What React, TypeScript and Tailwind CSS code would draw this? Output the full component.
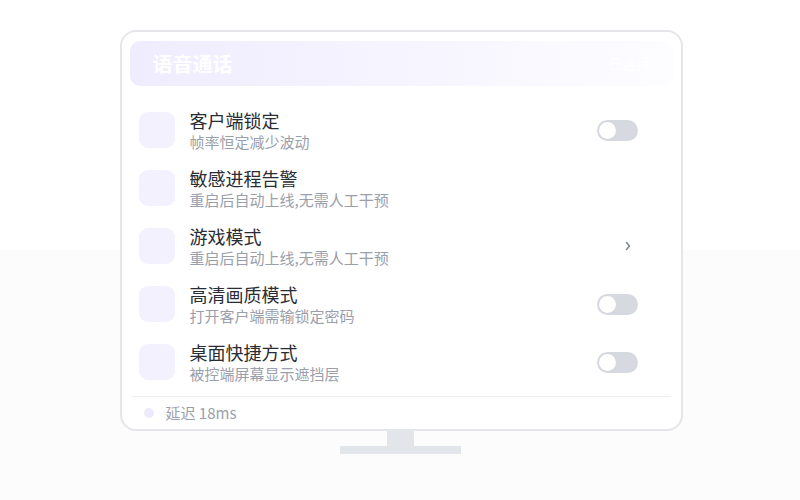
import type { ReactNode } from "react";

interface SettingRow {
  title: string;
  desc: string;
  action: "toggle" | "arrow" | "none";
}

const rows: SettingRow[] = [
  { title: "客户端锁定", desc: "帧率恒定减少波动", action: "toggle" },
  { title: "敏感进程告警", desc: "重启后自动上线,无需人工干预", action: "none" },
  { title: "游戏模式", desc: "重启后自动上线,无需人工干预", action: "arrow" },
  { title: "高清画质模式", desc: "打开客户端需输锁定密码", action: "toggle" },
  { title: "桌面快捷方式", desc: "被控端屏幕显示遮挡层", action: "toggle" },
];

function Toggle() {
  return (
    <div className="flex h-[21px] w-[41px] items-center rounded-full bg-[#d6d9df] p-[2px]">
      <div className="h-[17px] w-[17px] rounded-full bg-white shadow-[0_0_0_0.5px_#cfd3da]" />
    </div>
  );
}

function Chevron() {
  return (
    <svg width="8" height="12" viewBox="0 0 8 12" className="mr-[6px]">
      <path d="M2.5 2.5 L5.5 6 L2.5 9.5" fill="none" stroke="#7b8190" strokeWidth="1.4" strokeLinecap="round" strokeLinejoin="round" />
    </svg>
  );
}

function Row({ row }: { row: SettingRow }) {
  let action: ReactNode = null;
  if (row.action === "toggle") action = <Toggle />;
  if (row.action === "arrow") action = <Chevron />;

  return (
    <div className="flex h-[58px] items-center pl-[9px] pr-[35px]">
      <div className="h-[36px] w-[36px] shrink-0 rounded-[9px] bg-[#f3f1fe]" />
      <div className="ml-[15px] flex flex-1 flex-col">
        <span className="text-[18px] leading-[23px] text-[#2a2d33]">{row.title}</span>
        <span className="text-[15px] leading-[20px] text-[#9aa0ab]">{row.desc}</span>
      </div>
      <div className="flex w-[41px] justify-end">{action}</div>
    </div>
  );
}

export default function App() {
  return (
    <div
      className="flex h-[500px] w-[800px] flex-col items-center bg-gradient-to-b from-white from-50% to-[#fcfcfc] to-50% pt-[30px]"
      style={{ fontFamily: '"Noto Sans CJK SC", "Noto Sans", sans-serif' }}
    >
      {/* Screen */}
      <div className="ml-[2px] flex h-[401px] w-[563px] flex-col rounded-[16px] border-2 border-[#e4e6ea] bg-white px-[8px] pt-[9px]">
        <div className="flex h-[45px] items-center justify-between rounded-[10px] bg-gradient-to-r from-[#efecff] to-[#fdfdff] pl-[23px] pr-[22px]">
          <span className="text-[20px] font-bold text-white">语音通话</span>
          <span className="text-[14px] text-white">已连接</span>
        </div>

        <div className="mt-[15px] flex flex-col">
          {rows.map((row) => (
            <Row key={row.title} row={row} />
          ))}
        </div>

        <div className="mx-[2px] mt-[5px] border-t border-[#eceef2]" />

        <div className="flex h-[32px] items-center pl-[14px]">
          <div className="h-[10px] w-[10px] rounded-full bg-[#eceafb]" />
          <span className="ml-[12px] text-[15px] text-[#9aa0ab]">延迟 18ms</span>
        </div>
      </div>

      {/* Stand */}
      <div className="h-[15px] w-[27px] bg-[#e2e5e9]" />
      <div className="h-[8px] w-[121px] bg-[#e2e5e9]" />
    </div>
  );
}
